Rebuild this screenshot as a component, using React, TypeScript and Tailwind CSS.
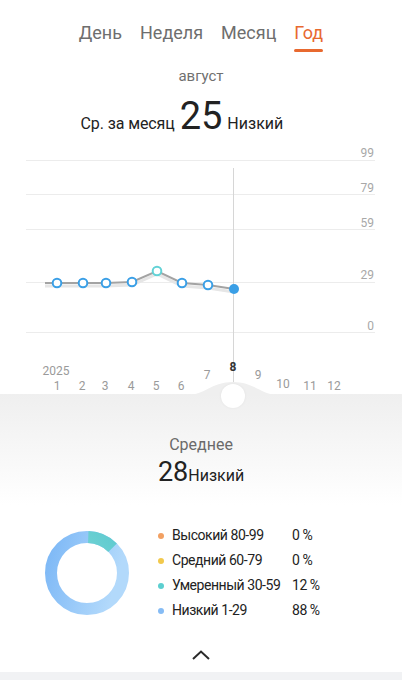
import React from 'react';

const tabs = ['День', 'Неделя', 'Месяц', 'Год'];

const grid = [
  { y: 20, label: '99', ly: 17 },
  { y: 54, label: '79', ly: 52 },
  { y: 89, label: '59', ly: 87 },
  { y: 142, label: '29', ly: 139 },
  { y: 192, label: '0', ly: 190 },
];

const points = [
  { x: 57, y: 143 },
  { x: 83, y: 143 },
  { x: 106, y: 143 },
  { x: 132, y: 142 },
  { x: 157, y: 131, teal: true },
  { x: 182, y: 143 },
  { x: 208, y: 145 },
];

const months = [
  { t: '1', x: 57, y: 250 },
  { t: '2', x: 82, y: 250 },
  { t: '3', x: 105, y: 250 },
  { t: '4', x: 131, y: 250 },
  { t: '5', x: 156, y: 250 },
  { t: '6', x: 181, y: 250 },
  { t: '7', x: 207, y: 239 },
  { t: '9', x: 258, y: 239 },
  { t: '10', x: 283, y: 248 },
  { t: '11', x: 310, y: 250 },
  { t: '12', x: 334, y: 250 },
];

const legend = [
  { color: 'bg-[#f2a062]', label: 'Высокий 80-99', value: '0 %' },
  { color: 'bg-[#f2c94c]', label: 'Средний 60-79', value: '0 %' },
  { color: 'bg-[#5ccfd0]', label: 'Умеренный 30-59', value: '12 %' },
  { color: 'bg-[#86bcf5]', label: 'Низкий 1-29', value: '88 %' },
];

const Chart: React.FC = () => (
  <svg width="402" height="254" viewBox="0 0 402 254" className="block">
    {grid.map((g) => (
      <g key={g.label}>
        <line x1="26" x2="375" y1={g.y + 0.5} y2={g.y + 0.5} stroke="#ececec" strokeWidth="1" />
        <text x="374" y={g.ly} textAnchor="end" fontSize="12" fill="#a8a8a8">
          {g.label}
        </text>
      </g>
    ))}
    <line x1="233.5" x2="233.5" y1="28" y2="254" stroke="#d6d6d6" strokeWidth="1" />
    <polyline
      points="45,146 57,146 83,146 106,146 132,145 157,134 182,146 208,148 234,152"
      fill="none"
      stroke="#e6e6e6"
      strokeWidth="3"
    />
    <polyline
      points="45,143 57,143 83,143 106,143 132,142 157,131 182,143 208,145 234,149"
      fill="none"
      stroke="#a3a3a3"
      strokeWidth="2"
    />
    {points.map((p) => (
      <circle
        key={p.x}
        cx={p.x}
        cy={p.y}
        r="4.3"
        fill="#fff"
        stroke={p.teal ? '#62d2d6' : '#3a9fe6'}
        strokeWidth="2"
      />
    ))}
    <circle cx="234" cy="149" r="5" fill="#3a9fe6" />
    <text x="56" y="235" textAnchor="middle" fontSize="12" fill="#9a9a9a">
      2025
    </text>
    {months.map((m) => (
      <text key={m.t} x={m.x} y={m.y} textAnchor="middle" fontSize="12" fill="#9a9a9a">
        {m.t}
      </text>
    ))}
    <text x="233" y="231" textAnchor="middle" fontSize="12" fontWeight="700" fill="#333">
      8
    </text>
  </svg>
);

const Donut: React.FC = () => {
  const r = 36;
  const c = 2 * Math.PI * r;
  return (
    <svg width="86" height="86" viewBox="0 0 86 86">
      <defs>
        <linearGradient id="blue" x1="0" y1="0" x2="1" y2="0.3">
          <stop offset="0" stopColor="#7db8f6" />
          <stop offset="1" stopColor="#b2d9fb" />
        </linearGradient>
        <linearGradient id="teal" x1="0" y1="0" x2="1" y2="1">
          <stop offset="0" stopColor="#93e2db" />
          <stop offset="1" stopColor="#5cc9cf" />
        </linearGradient>
      </defs>
      <circle cx="43" cy="43" r={r} fill="none" stroke="url(#blue)" strokeWidth="12" />
      <circle
        cx="43"
        cy="43"
        r={r}
        fill="none"
        stroke="url(#teal)"
        strokeWidth="12"
        strokeDasharray={`${c * 0.12} ${c}`}
        transform="rotate(-88 43 43)"
      />
    </svg>
  );
};

const App: React.FC = () => {
  return (
    <div className="w-[402px] h-[680px] bg-white overflow-hidden flex flex-col font-['Roboto',sans-serif]">
      <div className="flex justify-center gap-[18px] pt-[21px]">
        {tabs.map((t) => (
          <div key={t} className="flex flex-col items-center">
            <span className={`text-[18px] leading-[24px] ${t === 'Год' ? 'text-[#e8692f]' : 'text-[#6e6e6e]'}`}>
              {t}
            </span>
            <span className={`mt-[4px] h-[3px] w-full rounded-full ${t === 'Год' ? 'bg-[#e8692f]' : 'bg-transparent'}`} />
          </div>
        ))}
      </div>
      <div className="mt-[14px] text-center text-[15px] leading-[20px] text-[#707070]">август</div>
      <div className="mt-[8px] grid grid-cols-[1fr_auto_1fr] items-baseline gap-[5px] text-[#222]">
        <span className="text-[16px] text-right tracking-[-0.1px]">Ср. за месяц</span>
        <span className="text-[38px] leading-[44px]">25</span>
        <span className="text-[16px]">Низкий</span>
      </div>
      <div className="mt-[2px]">
        <Chart />
      </div>
      <div className="relative flex-1 flex flex-col items-center bg-gradient-to-b from-[#efefef] via-white via-40% to-white">
        <svg
          width="402"
          height="14"
          viewBox="0 0 402 14"
          className="absolute left-0 top-[-13px]"
        >
          <path d="M0,14 L188,14 C204,14 212,1 233,1 C254,1 262,14 278,14 L402,14 Z" fill="#efefef" />
        </svg>
        <div className="absolute left-[221px] top-[-10px] w-[24px] h-[24px] rounded-full bg-white shadow-[0_0_3px_rgba(0,0,0,0.06)]" />
        <div className="mt-[40px] text-[16px] leading-[22px] text-[#6a6a6a]">Среднее</div>
        <div className="flex items-baseline text-[#222]">
          <span className="text-[27px] leading-[32px]">28</span>
          <span className="text-[16px]">Низкий</span>
        </div>
        <div className="mt-[35px] w-full flex items-center pl-[44px]">
          <Donut />
          <div className="ml-[28px] flex flex-col">
            {legend.map((l) => (
              <div key={l.label} className="flex items-center h-[25px] text-[14px] tracking-[-0.45px] text-[#222]">
                <span className={`w-[6px] h-[6px] rounded-full ${l.color}`} />
                <span className="ml-[8px] w-[120px]">{l.label}</span>
                <span>{l.value}</span>
              </div>
            ))}
          </div>
        </div>
        <div className="mt-auto mb-[11px]">
          <svg width="20" height="12" viewBox="0 0 20 12">
            <path d="M2,10 L10,2.5 L18,10" fill="none" stroke="#2a2a2a" strokeWidth="2" />
          </svg>
        </div>
      </div>
      <div className="h-[8px] bg-[#f1f2f4]" />
    </div>
  );
};

export default App;
